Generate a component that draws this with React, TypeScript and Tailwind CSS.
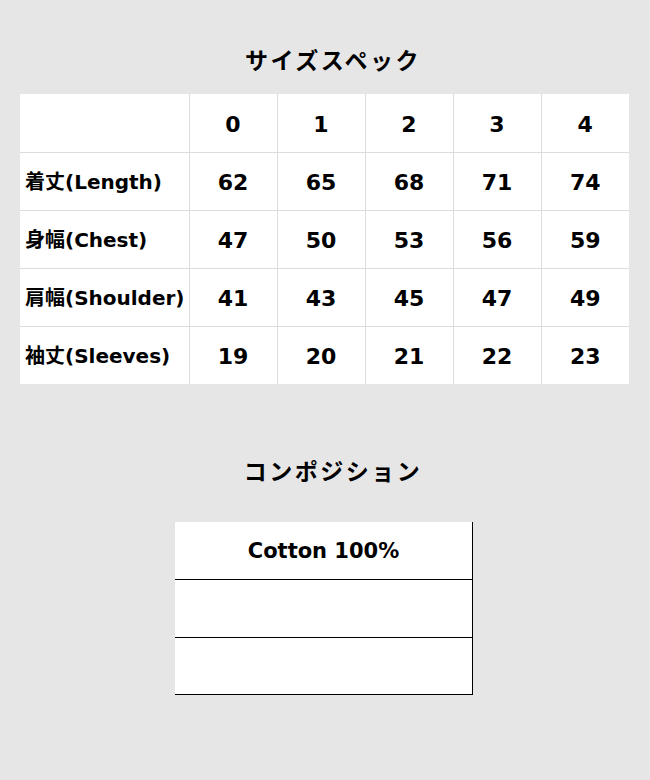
import React from "react";

const sizes = ["0", "1", "2", "3", "4"];

const rows = [
  { label: "着丈(Length)", values: ["62", "65", "68", "71", "74"] },
  { label: "身幅(Chest)", values: ["47", "50", "53", "56", "59"] },
  { label: "肩幅(Shoulder)", values: ["41", "43", "45", "47", "49"] },
  { label: "袖丈(Sleeves)", values: ["19", "20", "21", "22", "23"] },
];

const font = "font-['DejaVu_Sans','Noto_Sans_CJK_JP',sans-serif]";

function App() {
  return (
    <div className={`min-h-[780px] w-[650px] bg-[#e6e6e6] text-black ${font}`}>
      {/* Size spec */}
      <h2 className="pt-[45px] pl-[16px] text-center text-[23px] leading-[32px] font-bold tracking-[2.5px]">
        サイズスペック
      </h2>
      <table className="mx-[20px] mt-[17px] w-[609px] table-fixed border-collapse bg-white">
        <colgroup>
          <col className="w-[169px]" />
          {sizes.map((s) => (
            <col key={s} className="w-[88px]" />
          ))}
        </colgroup>
        <tbody>
          <tr className="h-[58px]">
            <td className="border border-[#dcdcdc] border-t-0 border-l-0"></td>
            {sizes.map((s, i) => (
              <td
                key={s}
                className={`border border-[#dcdcdc] border-t-0 pt-[3px] text-center text-[22px] font-bold ${
                  i === sizes.length - 1 ? "border-r-0" : ""
                }`}
              >
                {s}
              </td>
            ))}
          </tr>
          {rows.map((row, r) => (
            <tr key={row.label} className="h-[58px]">
              <td
                className={`border border-[#dcdcdc] border-l-0 pt-[1px] pl-[5px] text-[20px] font-bold whitespace-nowrap ${
                  r === rows.length - 1 ? "border-b-0" : ""
                }`}
              >
                {row.label}
              </td>
              {row.values.map((v, i) => (
                <td
                  key={i}
                  className={`border border-[#dcdcdc] pt-[3px] text-center text-[22px] font-bold ${
                    i === row.values.length - 1 ? "border-r-0" : ""
                  } ${r === rows.length - 1 ? "border-b-0" : ""}`}
                >
                  {v}
                </td>
              ))}
            </tr>
          ))}
        </tbody>
      </table>

      {/* Composition */}
      <h2 className="mt-[72px] pl-[16px] text-center text-[23px] leading-[32px] font-bold tracking-[2.5px]">
        コンポジション
      </h2>
      <div className="ml-[175px] mt-[34px] w-[298px] border-r border-black bg-white">
        <div className="flex h-[58px] items-center justify-center border-b border-black pt-[3px] text-[21px] font-bold">
          Cotton 100%
        </div>
        <div className="h-[58px] border-b border-black"></div>
        <div className="h-[57px] border-b border-black"></div>
      </div>
    </div>
  );
}

export default App;
